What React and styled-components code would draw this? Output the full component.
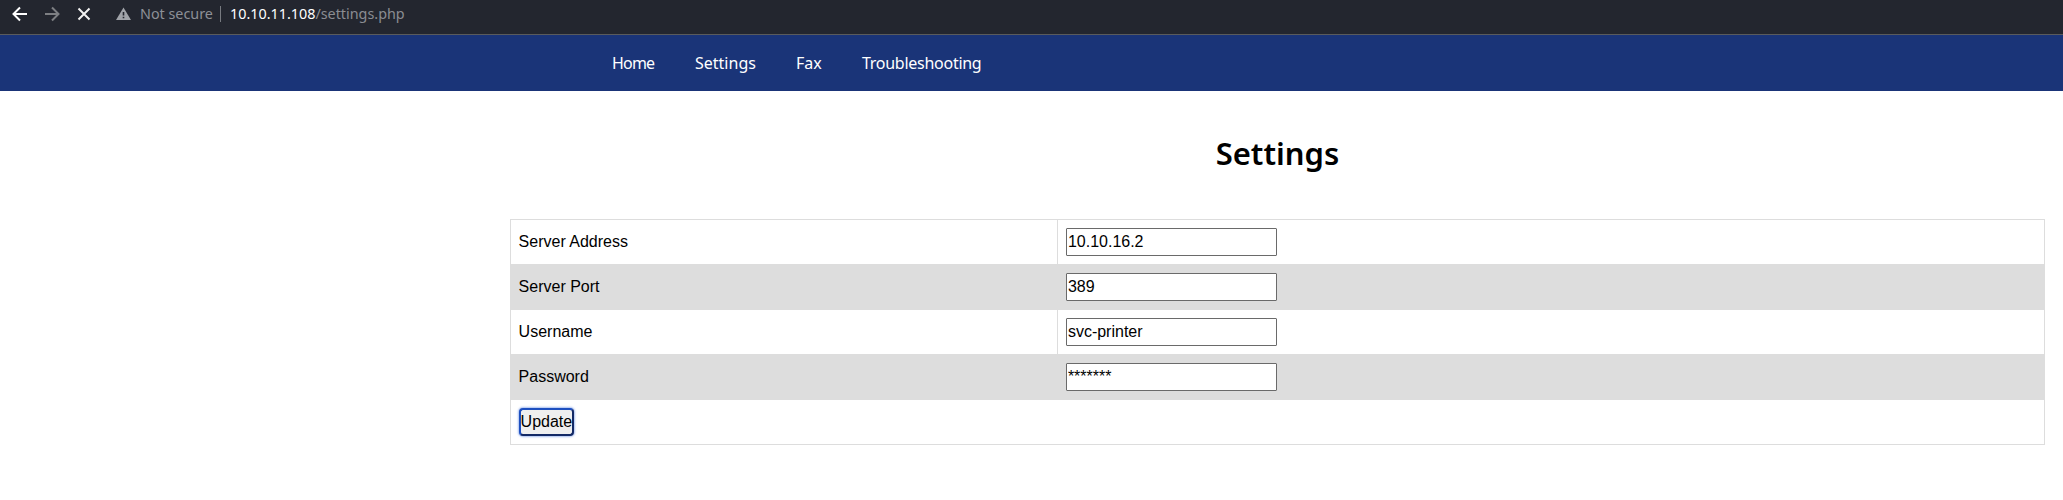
import React from "react";
import styled, { createGlobalStyle } from "styled-components";

const GlobalStyle = createGlobalStyle`
  * { box-sizing: border-box; }
  body {
    margin: 0;
    background: #fff;
    color: #000;
    font: 16px "Liberation Sans", Arial, sans-serif;
  }
`;

const BrowserBar = styled.header`
  display: flex;
  align-items: flex-start;
  height: 35px;
  padding-left: 12px;
  background: #23262f;
  border-bottom: 1px solid #5a5b5c;
  font: 14.35px/28px "Noto Sans", sans-serif;
`;

const BarIcon = styled.svg`
  display: block;
  flex: none;
  width: 16px;
  height: 28px;
  margin-right: ${(p) => p.$gap}px;
  fill: none;
  stroke: ${(p) => p.$color};
  stroke-width: 2;
`;

const Security = styled.span`
  width: 80px;
  white-space: nowrap;
  color: #8d9097;
`;

const Divider = styled.span`
  width: 1px;
  height: 16px;
  margin: 6px 9px 0 0;
  background: #777a80;
`;

const Address = styled.span`
  color: #8a8c92;
  white-space: nowrap;
`;

const Host = styled.span`
  color: #fff;
`;

const Nav = styled.nav`
  display: flex;
  align-items: center;
  gap: 40px;
  height: 56px;
  padding-left: 612px;
  background: #1a3478;
  font: 16px "Noto Sans", sans-serif;
  color: #fff;
`;

const NavLink = styled.a`
  width: ${(p) => p.$width}px;
  white-space: nowrap;
  letter-spacing: ${(p) => p.$tracking}px;
`;

const Content = styled.main`
  width: 1535px;
  margin-left: 510px;
`;

const Title = styled.h1`
  margin: 0;
  height: 128px;
  padding-top: 41px;
  text-align: center;
  font: 600 31px/42px "Noto Sans", sans-serif;
`;

const Table = styled.table`
  width: 100%;
  table-layout: fixed;
  border-collapse: collapse;
  border: 1px solid #ddd;
`;

const Row = styled.tr`
  height: 45px;
  &:nth-child(even) { background: #ddd; }
`;

const Cell = styled.td`
  width: ${(p) => p.$width || "auto"};
  padding: 8px 8px 8px 7.6px;
  border: 1px solid #ddd;
  line-height: 18px;
`;

const Field = styled.input`
  display: block;
  width: 211px;
  height: 28px;
  padding: 1px 1px 1px 1.3px;
  border: 1px solid #6a6a6a;
  border-radius: 1px;
  background: #fff;
  color: #000;
  font: inherit;
  outline: none;
`;

const UpdateButton = styled.button`
  display: block;
  width: 55px;
  height: 28px;
  padding: 0;
  border: 2px solid;
  border-color: #1d4fc0 #142a66 #142a66 #1d4fc0;
  border-radius: 4px;
  background: #efefef;
  color: #000;
  font: inherit;
  line-height: 22px;
  box-shadow: 0 0 2px 1px #a9bff0;
`;

const links = [
  ["Home", 43, -0.8],
  ["Settings", 61, 0],
  ["Fax", 26, 0],
  ["Troubleshooting", 120, -0.27],
];

const settings = [
  ["Server Address", "10.10.16.2"],
  ["Server Port", "389"],
  ["Username", "svc-printer"],
  ["Password", "*******"],
];

export default function App() {
  return (
    <>
      <GlobalStyle />
      <BrowserBar>
        <BarIcon $gap={16} $color="#fff" viewBox="0 0 16 28">
          <path d="M15 14H2.5M8 7.5L1.5 14L8 20.5" />
        </BarIcon>
        <BarIcon $gap={17} $color="#7d7f83" viewBox="0 0 16 28">
          <path d="M1 14H13.5M8 7.5L14.5 14L8 20.5" />
        </BarIcon>
        <BarIcon $gap={22} $color="#f2f2f2" viewBox="0 0 16 28">
          <path d="M1.5 8.5L12.5 19.5M12.5 8.5L1.5 19.5" />
        </BarIcon>
        <BarIcon $gap={9} $color="none" viewBox="0 0 16 28">
          <path d="M8.5 7.5L16 20H1Z" fill="#a0a3a9" />
          <path d="M7.7 12h1.6v3.5H7.7zM7.7 16.7h1.6v1.6H7.7z" fill="#23262f" />
        </BarIcon>
        <Security>Not secure</Security>
        <Divider />
        <Address><Host>10.10.11.108</Host>/settings.php</Address>
      </BrowserBar>
      <Nav>
        {links.map(([label, width, tracking]) => (
          <NavLink key={label} $width={width} $tracking={tracking}>{label}</NavLink>
        ))}
      </Nav>
      <Content>
        <Title>Settings</Title>
        <Table>
          <tbody>
            {settings.map(([label, value]) => (
              <Row key={label}>
                <Cell $width="547px">{label}</Cell>
                <Cell><Field aria-label={label} defaultValue={value} /></Cell>
              </Row>
            ))}
            <Row>
              <Cell colSpan={2}><UpdateButton>Update</UpdateButton></Cell>
            </Row>
          </tbody>
        </Table>
      </Content>
    </>
  );
}
